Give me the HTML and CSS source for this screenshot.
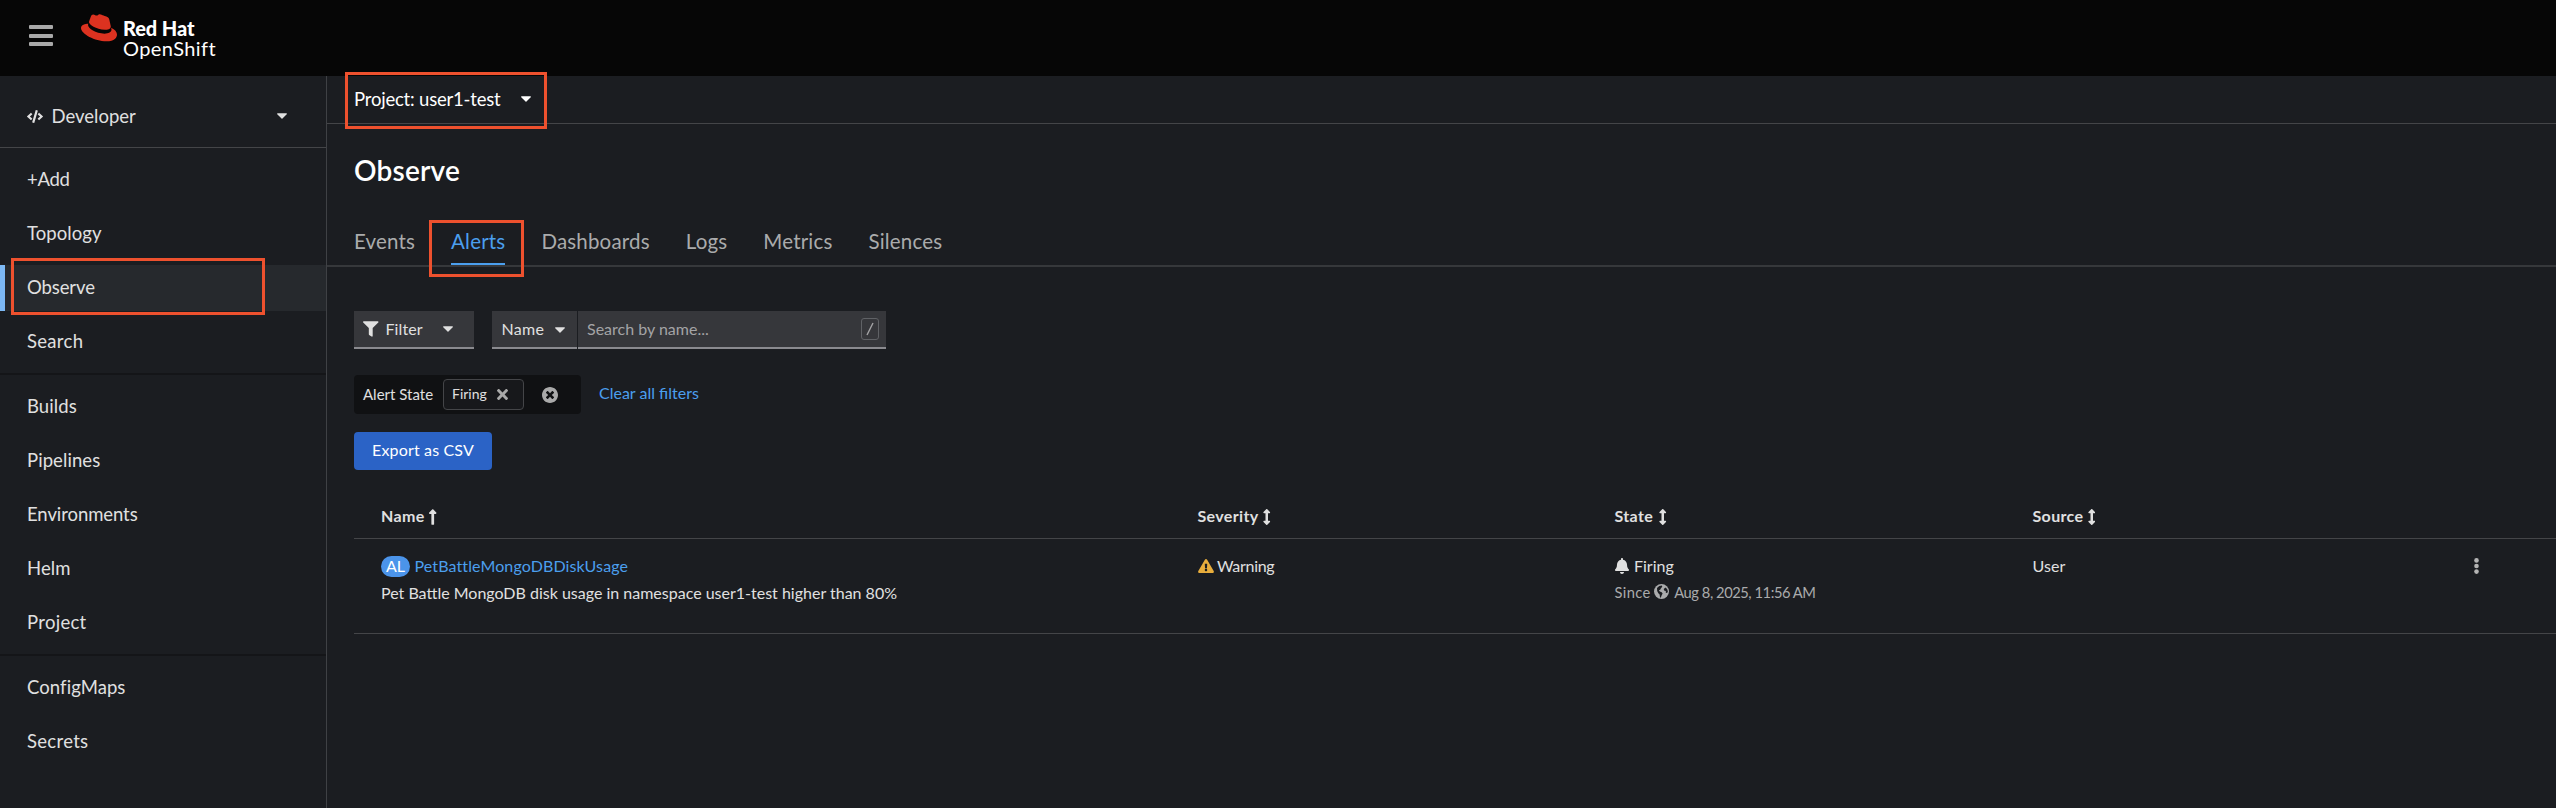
FILE: index.html
```html
<!DOCTYPE html>
<html lang="en">
<head>
<meta charset="utf-8">
<title>Alerts · Red Hat OpenShift</title>
<link rel="stylesheet" href="styles.css">
</head>
<body>
<svg class="sprite" aria-hidden="true">
  <symbol id="caret" viewBox="10 192 300 170"><path d="M31.3 192h257.3c17.8 0 26.7 21.5 14.1 34.1L174.1 354.7c-7.8 7.8-20.5 7.8-28.3 0L17.2 226.1C4.6 213.5 13.5 192 31.3 192z"/></symbol>
  <symbol id="sort" viewBox="18 0 220 512"><path d="M214.059 377.941H168V134.059h46.059c21.382 0 32.09-25.851 16.971-40.971L144.971 7.029c-9.373-9.373-24.568-9.373-33.941 0L24.971 93.088c-15.119 15.119-4.411 40.971 16.971 40.971H88v243.882H41.941c-21.382 0-32.09 25.851-16.971 40.971l86.059 86.059c9.373 9.373 24.568 9.373 33.941 0l86.059-86.059c15.12-15.119 4.412-40.971-16.97-40.971z"/></symbol>
</svg>

<header class="masthead">
  <div class="burger"><i></i><i></i><i></i></div>
  <svg class="hat" viewBox="0 62 512 388"><path d="M341.52 285.56c33.65 0 82.34-6.94 82.34-47 .22-6.74.86-1.82-20.88-96.24-4.62-19.15-8.68-27.84-42.31-44.65-26.09-13.34-82.92-35.37-99.73-35.37-15.66 0-20.2 20.17-38.87 20.17-18 0-31.31-15.06-48.12-15.06-16.14 0-26.66 11-34.78 33.62-27.5 77.55-26.28 74.27-26.12 78.27 0 24.8 97.64 106.11 228.47 106.11M429 254.84c4.65 22 4.65 24.35 4.65 27.25 0 37.66-42.33 58.56-98 58.56-125.74.08-235.91-73.65-235.91-122.33a49.55 49.55 0 0 1 4.06-19.72C58.56 200.86 0 208.93 0 260.63c0 84.67 200.63 189 359.49 189 121.79 0 152.51-55.08 152.51-98.58 0-34.21-29.59-73.05-82.93-96.24"/></svg>
  <div class="brand"><b>Red Hat</b><span>OpenShift</span></div>
</header>

<div class="layout">
  <aside class="sidebar">
    <div class="perspective">
      <svg class="code" viewBox="0 0 640 512"><path d="M278.9 511.5l-61-17.7c-6.4-1.8-10-8.5-8.2-14.9L346.2 8.7c1.8-6.4 8.5-10 14.9-8.2l61 17.7c6.4 1.8 10 8.5 8.2 14.9L293.8 503.3c-1.9 6.4-8.5 10.1-14.9 8.2zm-114-112.2l43.5-46.4c4.6-4.9 4.3-12.7-.8-17.2L117 256l90.6-79.7c5.1-4.5 5.5-12.3.8-17.2l-43.5-46.4c-4.5-4.8-12.1-5.1-17-.5L3.8 247.2c-5.1 4.7-5.1 12.8 0 17.5l144.1 135.1c4.9 4.6 12.5 4.4 17-.5zm327.2.6l144.1-135.1c5.1-4.7 5.1-12.8 0-17.5L492.1 112.1c-4.8-4.5-12.4-4.3-17 .5L431.6 159c-4.6 4.9-4.3 12.7.8 17.2L523 256l-90.6 79.7c-5.1 4.5-5.5 12.3-.8 17.2l43.5 46.4c4.5 4.9 12.1 5.1 17 .6z"/></svg>
      <span>Developer</span>
      <svg class="caret"><use href="#caret"/></svg>
    </div>
    <nav class="nav">
      <a class="tight">+Add</a>
      <a>Topology</a>
      <a class="current"><span>Observe</span><i class="mark mark-nav"></i></a>
      <a class="wide">Search</a>
      <hr>
      <a>Builds</a>
      <a>Pipelines</a>
      <a class="snug">Environments</a>
      <a>Helm</a>
      <a class="wide">Project</a>
      <hr>
      <a>ConfigMaps</a>
      <a class="wide">Secrets</a>
    </nav>
  </aside>

  <main class="main">
    <div class="project">
      <span>Project: user1-test</span>
      <svg class="caret"><use href="#caret"/></svg>
      <i class="mark mark-project"></i>
    </div>
    <h1>Observe</h1>
    <div class="tabs">
      <a>Events</a>
      <a class="active">Alerts<i class="mark mark-tab"></i></a>
      <a>Dashboards</a>
      <a>Logs</a>
      <a>Metrics</a>
      <a>Silences</a>
    </div>

    <div class="toolbar">
      <div class="select filter">
        <svg class="funnel" viewBox="0 0 512 512"><path d="M487.976 0H24.028C2.71 0-8.047 25.866 7.058 40.971L192 225.941V432c0 7.831 3.821 15.17 10.237 19.662l80 55.98C298.02 518.69 320 507.493 320 487.98V225.941l184.947-184.97C520.021 25.896 509.338 0 487.976 0z"/></svg>
        <span>Filter</span>
        <svg class="caret"><use href="#caret"/></svg>
      </div>
      <div class="select name">
        <span>Name</span>
        <svg class="caret"><use href="#caret"/></svg>
      </div>
      <div class="select search"><span>Search by name...</span><kbd><svg viewBox="0 0 8 14"><path d="M7 1 1 13"/></svg></kbd></div>
    </div>

    <div class="chips">
      <div class="group">
        <span>Alert State</span>
        <div class="chip"><span>Firing</span>
          <svg class="times" viewBox="0 80 352 352"><path d="M242.72 256l100.07-100.07c12.28-12.28 12.28-32.19 0-44.48l-22.24-22.24c-12.28-12.28-32.19-12.28-44.48 0L176 189.28 75.93 89.21c-12.28-12.28-32.19-12.28-44.48 0L9.21 111.45c-12.28 12.28-12.28 32.19 0 44.48L109.28 256 9.21 356.07c-12.28 12.28-12.28 32.19 0 44.48l22.24 22.24c12.28 12.28 32.2 12.28 44.48 0L176 322.72l100.07 100.07c12.28 12.28 32.2 12.28 44.48 0l22.24-22.24c12.28-12.28 12.28-32.19 0-44.48L242.72 256z"/></svg>
        </div>
        <svg class="clear" viewBox="8 8 496 496"><path d="M256 8C119 8 8 119 8 256s111 248 248 248 248-111 248-248S393 8 256 8zm121.6 313.1c4.7 4.7 4.7 12.3 0 17L338 377.6c-4.7 4.7-12.3 4.7-17 0L256 312l-65.1 65.6c-4.7 4.7-12.3 4.7-17 0L134.4 338c-4.7-4.7-4.7-12.3 0-17l65.6-65-65.6-65.1c-4.7-4.7-4.7-12.3 0-17l39.6-39.6c4.7-4.7 12.3-4.7 17 0l65 65.7 65.1-65.6c4.7-4.7 12.3-4.7 17 0l39.6 39.6c4.7 4.7 4.7 12.3 0 17L312 256l65.6 65.1z"/></svg>
      </div>
      <a class="link">Clear all filters</a>
    </div>

    <button class="export">Export as CSV</button>

    <div class="table">
      <div class="row head">
        <div>Name<svg class="up" viewBox="18 32 220 448"><path d="M88 166.059V468c0 6.627 5.373 12 12 12h56c6.627 0 12-5.373 12-12V166.059h46.059c21.382 0 32.09-25.851 16.971-40.971l-86.059-86.059c-9.373-9.373-24.569-9.373-33.941 0l-86.059 86.059c-15.119 15.119-4.411 40.971 16.971 40.971H88z"/></svg></div>
        <div>Severity<svg><use href="#sort"/></svg></div>
        <div class="state">State<svg><use href="#sort"/></svg></div>
        <div>Source<svg><use href="#sort"/></svg></div>
        <div></div>
      </div>
      <div class="row body">
        <div>
          <div class="line"><span class="badge">AL</span><a class="link alert">PetBattleMongoDBDiskUsage</a></div>
          <div class="line">Pet Battle MongoDB disk usage in namespace user1-test higher than 80%</div>
        </div>
        <div>
          <div class="line"><svg class="warn" viewBox="0 0 576 512"><path d="M569.517 440.013C587.975 472.007 564.806 512 527.94 512H48.054c-36.937 0-59.999-40.055-41.577-71.987L246.423 23.985c18.467-32.009 64.72-31.951 83.154 0l239.94 416.028zM288 354c-25.405 0-46 20.595-46 46s20.595 46 46 46 46-20.595 46-46-20.595-46-46-46zm-43.673-165.346l7.418 136c.347 6.364 5.609 11.346 11.982 11.346h48.546c6.373 0 11.635-4.982 11.982-11.346l7.418-136c.375-6.874-5.098-12.654-11.982-12.654h-63.383c-6.884 0-12.356 5.78-11.981 12.654z"/></svg><span class="warning">Warning</span></div>
        </div>
        <div>
          <div class="line"><svg class="bell" viewBox="0 0 448 512"><path d="M224 512c35.32 0 63.97-28.65 63.97-64H160.03c0 35.35 28.65 64 63.97 64zm215.39-149.71c-19.32-20.76-55.47-51.99-55.47-154.29 0-77.7-54.48-139.9-127.94-155.16V32c0-17.67-14.32-32-31.98-32s-31.98 14.33-31.98 32v20.84C118.56 68.1 64.08 130.3 64.08 208c0 102.3-36.15 133.53-55.47 154.29-6 6.45-8.66 14.16-8.61 21.71.11 16.4 12.98 32 32.1 32h383.8c19.12 0 32-15.6 32.1-32 .05-7.55-2.61-15.27-8.61-21.71z"/></svg>Firing</div>
          <div class="since"><span>Since</span>
            <svg class="globe" viewBox="0 0 16 16"><circle cx="8" cy="8" r="8"/><path class="land" d="M3.2 4.2 5.6 2.2 8.4 1.6 8.8 2.8 7.4 4.4 6.6 6.2 5.2 6.6 6.2 8 8.2 8.8 9.2 10.2 8.2 12 7.2 14.6 6.4 14.2 6 11.2 4.6 9.8 3.4 7.4zM10.4 5.2 12.2 3.6 14 5.4 14.8 8 14 9.6 12.6 9.2 12.6 7.4 10.8 7z"/></svg>
            <span class="date">Aug 8, 2025, 11:56 AM</span></div>
        </div>
        <div><div class="line user">User</div></div>
        <div class="kebab"><svg viewBox="0 0 5 16"><circle cx="2.5" cy="2.4" r="2.3"/><circle cx="2.5" cy="8" r="2.3"/><circle cx="2.5" cy="13.6" r="2.3"/></svg></div>
      </div>
    </div>
  </main>
</div>
</body>
</html>
```
FILE: styles.css
```css
* { box-sizing: border-box; }
body {
  margin: 0;
  height: 808px;
  overflow: hidden;
  display: flex;
  flex-direction: column;
  background: #1b1d21;
  color: #e0e0e0;
  font: 16px/1.2 Lato, "Open Sans", sans-serif;
}
svg { fill: currentColor; flex: none; display: block; }
.sprite { position: absolute; width: 0; height: 0; }
.caret { width: 10px; height: 6px; }
.link { color: #4b9fee; }

/* Highlight frames drawn over the page */
.mark { position: absolute; border: 3px solid #ee512e; pointer-events: none; }
.mark-nav { left: 6px; top: -7px; width: 254px; height: 57px; }
.mark-project { left: 18px; top: -4px; width: 202px; height: 57px; }
.mark-tab { left: -22px; top: 2px; width: 95px; height: 57px; }

/* Masthead */
.masthead { height: 76px; flex: none; display: flex; background: #060606; padding-left: 28.5px; }
.burger { width: 24.5px; padding-top: 25px; display: flex; flex-direction: column; gap: 4.5px; }
.burger i { height: 4px; border-radius: 1px; background: #a9a9a9; }
.hat { width: 36px; height: 27.5px; margin: 14px 6px 0 28px; color: #dc3220; }
.brand { padding-top: 17.5px; display: flex; flex-direction: column; color: #fff; font-size: 20px; line-height: 20px; }
.brand b { font-weight: 900; letter-spacing: -.1px; }
.brand span { letter-spacing: .4px; }

.layout { flex: 1; min-height: 0; display: flex; }

/* Sidebar */
.sidebar { width: 327px; flex: none; border-right: 1px solid #3f4145; font-size: 18.5px; }
.perspective { height: 72px; display: flex; align-items: center; padding: 9px 39px 0 27px; border-bottom: 1px solid #444548; }
.perspective .code { width: 16px; height: 13px; }
.perspective span { flex: 1; margin-left: 8.5px; }
.nav { padding-top: 4px; display: flex; flex-direction: column; letter-spacing: .08px; }
.nav a { height: 54px; line-height: 54px; padding-left: 27px; position: relative; }
.nav .wide { letter-spacing: .3px; }
.nav .tight { letter-spacing: -.3px; }
.nav .snug { letter-spacing: -.08px; }
.nav hr { width: 100%; height: 2px; margin: 5px 0 4px; border: 0; background: #141518; }
.nav .current { height: 46px; margin: 5px 0 3px; line-height: 44px; padding-left: 22px; background: #26292d; border-left: 5px solid #7db9f5; letter-spacing: -.1px; }

/* Page header */
.main { flex: 1; min-width: 0; display: flex; flex-direction: column; }
.project { position: relative; height: 48px; flex: none; display: flex; align-items: center; gap: 21px; padding: 0 0 1px 27px; border-bottom: 1px solid #444548; color: #fff; font-size: 18.5px; letter-spacing: -.2px; }
h1 { margin: 0; padding: 26px 0 0 27px; height: 94px; line-height: 41px; font-size: 28px; font-weight: 600; letter-spacing: .2px; color: #fff; }
.tabs { height: 49px; flex: none; display: flex; gap: 36px; padding-left: 27px; border-bottom: 2px solid #36383b; font-size: 20.5px; line-height: 46px; letter-spacing: .18px; color: #aaabac; }
.tabs .active { position: relative; color: #4b9fee; box-shadow: inset 0 -2px #4b9fee; }

/* Toolbar */
.toolbar { display: flex; margin: 44px 0 0 27px; }
.select { height: 38px; display: flex; align-items: center; background: #36373b; border-bottom: 2px solid #8a8a8f; }
.filter { width: 120px; padding-left: 9px; margin-right: 17.5px; }
.filter span { width: 57px; margin-left: 7px; letter-spacing: .1px; }
.funnel { width: 15.5px; height: 16px; }
.name { width: 85.5px; padding-left: 10px; margin-right: 1px; }
.name span { width: 53.5px; letter-spacing: .3px; }
.name .caret { margin-top: 2px; }
.search { width: 308px; padding: 0 7px 0 9px; justify-content: space-between; color: #a4a4a6; }
.search kbd { width: 18px; height: 22px; border: 1px solid #606266; border-radius: 3px; display: grid; place-items: center; }
.search kbd svg { width: 8px; height: 14px; fill: none; stroke: #a4a4a6; stroke-width: 1.4; }

.chips { display: flex; align-items: center; gap: 18.5px; margin: 26px 0 0 27px; }
.chips > .link { padding-bottom: 3px; }
.group { width: 226.5px; height: 39px; display: flex; align-items: center; padding-left: 9px; border-radius: 4px; background: #101113; font-size: 15px; }
.group > span { width: 80px; padding-bottom: 2px; }
.chip { width: 81px; height: 31px; display: flex; align-items: center; padding-left: 8px; border: 1px solid #444548; border-radius: 4px; background: #17181b; font-size: 14px; }
.chip span { width: 45px; }
.times { width: 11px; height: 11px; color: #aaa; }
.clear { width: 16px; height: 16px; margin-left: 18px; color: #aaa; }
.export { align-self: flex-start; width: 138px; height: 38px; margin: 17.5px 0 0 27px; padding: 0 0 2px; border: 0; border-radius: 4px; background: #2b63c6; color: #fff; font: inherit; letter-spacing: .15px; }

/* Alerts table */
.table { margin: 20.5px 0 0 27px; }
.row { display: grid; grid-template-columns: 816.5px 417px 418px 440px 1fr; padding-left: 27px; border-bottom: 1px solid #444548; }
.head { height: 49px; font-weight: 700; letter-spacing: .35px; line-height: 51px; }
.head > div { display: flex; gap: 4.5px; }
.head .state { gap: 6px; }
.head svg { width: 7.5px; height: 16px; margin-top: 18.5px; }
.body { height: 95px; padding-top: 14px; }
.line { height: 27px; display: flex; align-items: center; padding-bottom: 1px; }
.badge { width: 29px; height: 21px; border-radius: 11px; margin-right: 4.5px; display: grid; place-items: center; background: #4b94ea; color: #fff; line-height: 1; }
.alert { letter-spacing: .12px; }
.warn { width: 16px; height: 14px; margin-right: 3.5px; color: #e8ad3c; }
.warning { letter-spacing: -.3px; }
.bell { width: 14px; height: 16px; margin: 0 5px 0 .5px; }
.user { letter-spacing: .1px; }
.since { height: 26px; display: flex; align-items: center; font-size: 14.7px; letter-spacing: .4px; color: #aaabac; }
.globe { width: 15px; height: 15px; margin: -4px 5px 0 3.5px; }
.globe .land { fill: #1b1d21; }
.date { letter-spacing: -.45px; }
.kebab svg { width: 5px; height: 16px; margin: 5px 0 0 1px; color: #b4b4b4; }
```
